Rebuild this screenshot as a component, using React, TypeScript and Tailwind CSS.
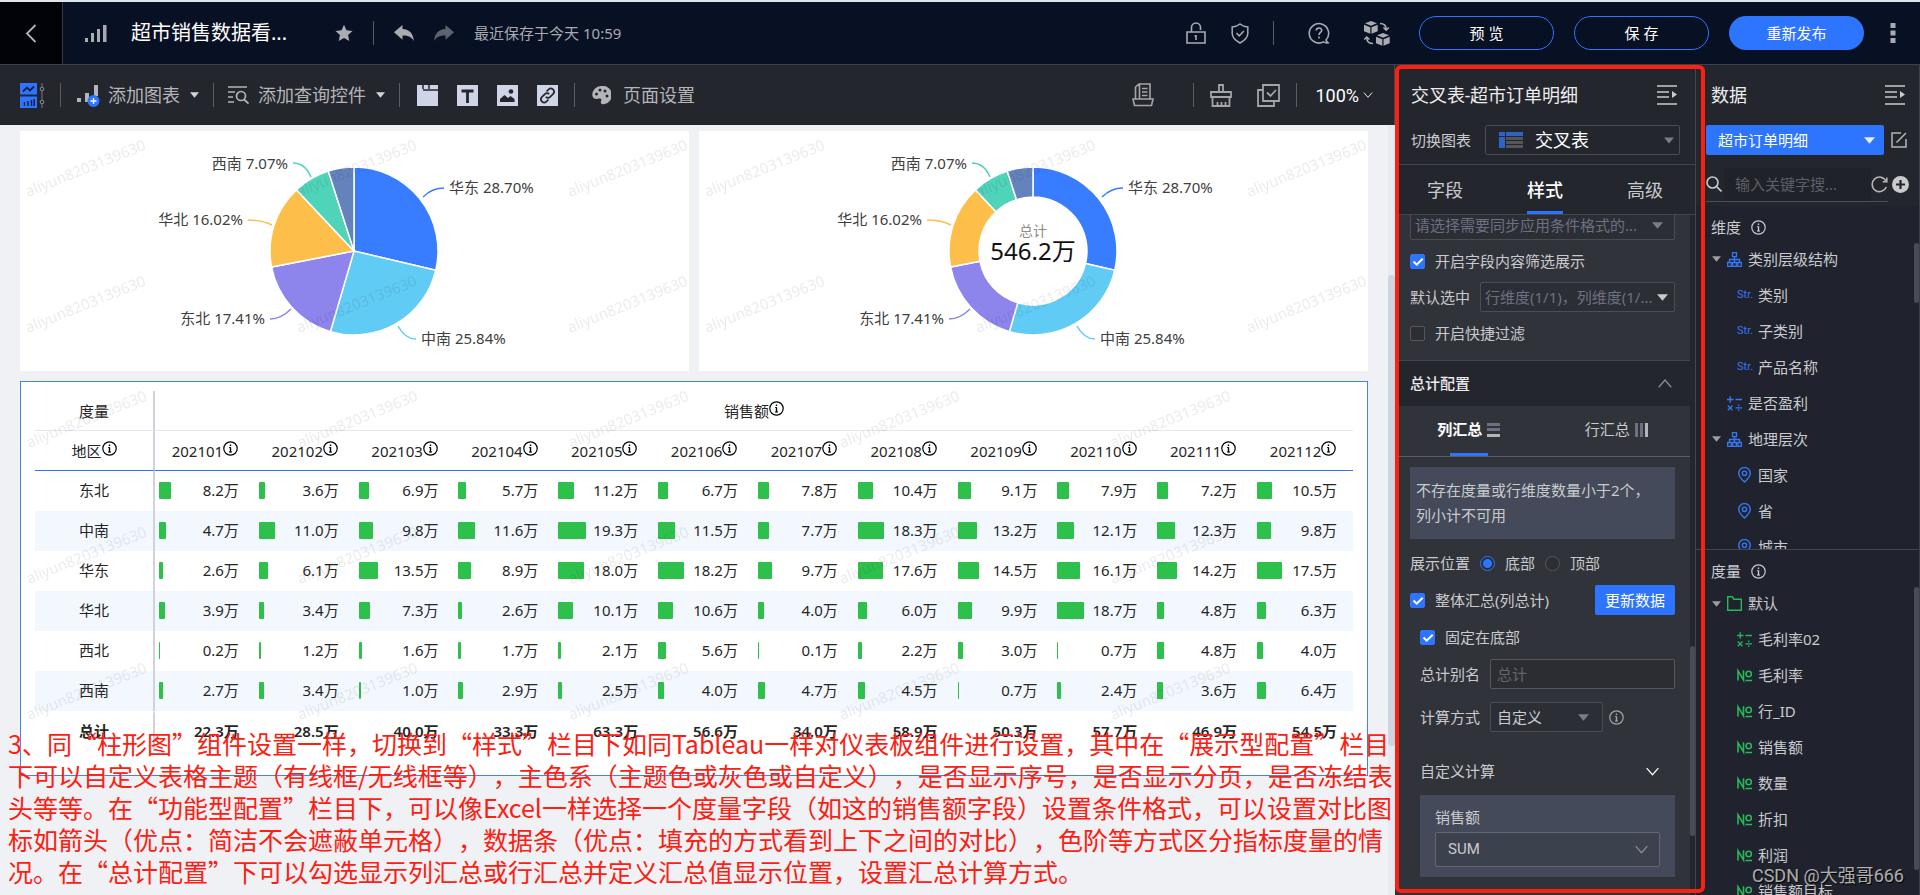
import { ReactNode, useState } from 'react'

type Slice = {
  name: string
  value: number
  color: string
  line?: string
  x?: number
  y?: number
  anchor?: 'start' | 'end'
}

type Field = {
  name: string
  icon: 'str' | 'calc' | 'tree' | 'pin' | 'no' | 'folder'
  depth: number
}

const slices: Slice[] = [
  { name: '华东', value: 28.7, color: '#387cff', line: 'M403 66 Q412 57 424 57', x: 429, y: 62, anchor: 'start' },
  { name: '中南', value: 25.84, color: '#60cbf5', line: 'M378 195 Q385 208 396 208', x: 401, y: 213, anchor: 'start' },
  { name: '东北', value: 17.41, color: '#8d84ec', line: 'M271 178 Q261 188 250 188', x: 245, y: 193, anchor: 'end' },
  { name: '华北', value: 16.02, color: '#fdbf49', line: 'M252 94 Q242 89 228 89', x: 223, y: 94, anchor: 'end' },
  { name: '西南', value: 7.07, color: '#4fd3b9', line: 'M291 46 Q285 32 273 32', x: 268, y: 38, anchor: 'end' },
  { name: '西北', value: 4.96, color: '#6482bc' },
]

const months = [
  '202101', '202102', '202103', '202104', '202105', '202106',
  '202107', '202108', '202109', '202110', '202111', '202112',
]

const rows = [
  { region: '东北', values: [8.2, 3.6, 6.9, 5.7, 11.2, 6.7, 7.8, 10.4, 9.1, 7.9, 7.2, 10.5] },
  { region: '中南', values: [4.7, 11.0, 9.8, 11.6, 19.3, 11.5, 7.7, 18.3, 13.2, 12.1, 12.3, 9.8] },
  { region: '华东', values: [2.6, 6.1, 13.5, 8.9, 18.0, 18.2, 9.7, 17.6, 14.5, 16.1, 14.2, 17.5] },
  { region: '华北', values: [3.9, 3.4, 7.3, 2.6, 10.1, 10.6, 4.0, 6.0, 9.9, 18.7, 4.8, 6.3] },
  { region: '西北', values: [0.2, 1.2, 1.6, 1.7, 2.1, 5.6, 0.1, 2.2, 3.0, 0.7, 4.8, 4.0] },
  { region: '西南', values: [2.7, 3.4, 1.0, 2.9, 2.5, 4.0, 4.7, 4.5, 0.7, 2.4, 3.6, 6.4] },
]

const totals = [22.3, 28.5, 40.0, 33.3, 63.3, 56.6, 34.0, 58.9, 50.3, 57.7, 46.9, 54.5]

const dimensions: Field[] = [
  { name: '类别层级结构', icon: 'tree', depth: 0 },
  { name: '类别', icon: 'str', depth: 1 },
  { name: '子类别', icon: 'str', depth: 1 },
  { name: '产品名称', icon: 'str', depth: 1 },
  { name: '是否盈利', icon: 'calc', depth: 0 },
  { name: '地理层次', icon: 'tree', depth: 0 },
  { name: '国家', icon: 'pin', depth: 1 },
  { name: '省', icon: 'pin', depth: 1 },
  { name: '城市', icon: 'pin', depth: 1 },
]

const measures: Field[] = [
  { name: '默认', icon: 'folder', depth: 0 },
  { name: '毛利率02', icon: 'calc', depth: 1 },
  { name: '毛利率', icon: 'no', depth: 1 },
  { name: '行_ID', icon: 'no', depth: 1 },
  { name: '销售额', icon: 'no', depth: 1 },
  { name: '数量', icon: 'no', depth: 1 },
  { name: '折扣', icon: 'no', depth: 1 },
  { name: '利润', icon: 'no', depth: 1 },
  { name: '销售额目标', icon: 'no', depth: 1 },
]

const noteLines = [
  '3、同“柱形图”组件设置一样，切换到“样式”栏目下如同Tableau一样对仪表板组件进行设置，其中在“展示型配置”栏目',
  '下可以自定义表格主题（有线框/无线框等），主色系（主题色或灰色或自定义），是否显示序号，是否显示分页，是否冻结表',
  '头等等。在“功能型配置”栏目下，可以像Excel一样选择一个度量字段（如这的销售额字段）设置条件格式，可以设置对比图',
  '标如箭头（优点：简洁不会遮蔽单元格），数据条（优点：填充的方式看到上下之间的对比），色阶等方式区分指标度量的情',
  '况。在“总计配置”下可以勾选显示列汇总或行汇总并定义汇总值显示位置，设置汇总计算方式。',
]

function slicePath(from: number, to: number, inner: number) {
  const cx = 334
  const cy = 120
  const r = 84
  const point = (t: number, radius: number) => {
    const a = t * Math.PI * 2 - Math.PI / 2
    return `${cx + radius * Math.cos(a)} ${cy + radius * Math.sin(a)}`
  }
  const large = to - from > 0.5 ? 1 : 0
  if (!inner) {
    return `M${cx} ${cy} L${point(from, r)} A${r} ${r} 0 ${large} 1 ${point(to, r)} Z`
  }
  return `M${point(from, inner)} L${point(from, r)} A${r} ${r} 0 ${large} 1 ${point(to, r)} L${point(to, inner)} A${inner} ${inner} 0 ${large} 0 ${point(from, inner)} Z`
}

function Watermark({ id }: { id: string }) {
  return (
    <svg className="pointer-events-none absolute inset-0 h-full w-full" aria-hidden="true">
      <defs>
        <pattern id={id} width="271" height="136" patternUnits="userSpaceOnUse">
          <text x="8" y="66" fontSize="15" fill="#000" fillOpacity="0.08" transform="rotate(-22 8 66)">
            aliyun8203139630
          </text>
        </pattern>
      </defs>
      <rect width="100%" height="100%" fill={`url(#${id})`} />
    </svg>
  )
}

function PieCard({ id, inner = 0, total }: { id: string; inner?: number; total?: string }) {
  let start = 0
  return (
    <section className="relative min-w-0 flex-1 bg-white">
      <svg className="h-60 w-full" viewBox="0 0 669 240" fontSize="15">
        {slices.map((slice) => {
          const from = start
          start += slice.value / 100
          return (
            <g key={slice.name}>
              <path d={slicePath(from, start, inner)} fill={slice.color} stroke="#fff" strokeWidth="1.5" />
              {slice.line && (
                <>
                  <path d={slice.line} fill="none" stroke={slice.color} strokeWidth="1.5" />
                  <text x={slice.x} y={slice.y} textAnchor={slice.anchor} fill="#404040">
                    {slice.name} {slice.value.toFixed(2)}%
                  </text>
                </>
              )}
            </g>
          )
        })}
        {total && (
          <>
            <text x="334" y="105" textAnchor="middle" fontSize="14" fill="#8c8c8c">总计</text>
            <text x="334" y="129" textAnchor="middle" fontSize="24" fill="#111">{total}</text>
          </>
        )}
      </svg>
      <Watermark id={id} />
    </section>
  )
}

function InfoIcon({ className }: { className: string }) {
  return (
    <svg className={className} viewBox="0 0 15 15" fill="none" stroke="currentColor" strokeWidth="1.2">
      <circle cx="7.5" cy="7.5" r="6.7" />
      <path d="M7.5 6.2v5M7.5 3.6v1.5" strokeWidth="1.4" />
      <path d="M6 11h3M6.2 6.5h1.3" strokeWidth="1" />
    </svg>
  )
}

function CrossTable() {
  return (
    <section className="relative mt-[10px] border border-[#3d85f0] bg-white px-[14px] pt-[9px] pb-6">
      <table className="w-full table-fixed border-separate border-spacing-0 text-[15px] leading-5 text-[#262626]">
        <colgroup>
          <col className="w-[120px]" />
          {months.map((month) => <col key={month} />)}
        </colgroup>
        <thead>
          <tr>
            <th className="h-10 border-r-2 border-b border-r-[#cfd2dd] border-b-[#e6e7ea] p-0 font-normal">度量</th>
            <th colSpan={12} className="h-10 border-b border-[#e6e7ea] p-0 font-normal">
              <span className="inline-flex items-start">
                销售额<InfoIcon className="h-[15px] w-[15px] text-black" />
              </span>
            </th>
          </tr>
          <tr>
            <th className="h-10 border-r-2 border-b border-r-[#cfd2dd] border-b-[#2f74f2] p-0 font-normal">
              <span className="inline-flex items-start">
                地区<InfoIcon className="h-[15px] w-[15px] text-black" />
              </span>
            </th>
            {months.map((month) => (
              <th key={month} className="h-10 border-b border-[#2f74f2] p-0 font-normal">
                <span className="inline-flex items-start">
                  {month}<InfoIcon className="h-[15px] w-[15px] text-black" />
                </span>
              </th>
            ))}
          </tr>
        </thead>
        <tbody>
          {rows.map((row) => (
            <tr key={row.region} className="even:bg-[#f3f8ff]">
              <th className="h-10 border-r-2 border-[#cfd2dd] p-0 pb-[2px] font-normal">{row.region}</th>
              {row.values.map((value, i) => (
                <td key={months[i]} className="h-10 p-0 pb-[2px]">
                  <div className="flex items-center justify-between pr-4 pl-1">
                    <span
                      className="h-[17px] rounded-[1px] bg-[#2dc14c]"
                      style={{ width: Math.max(1, Math.round(value * 1.4 + 0.5)) }}
                    />
                    <span>{value.toFixed(1)}万</span>
                  </div>
                </td>
              ))}
            </tr>
          ))}
        </tbody>
        <tfoot>
          <tr>
            <th className="h-10 border-t-2 border-r-2 border-t-white border-r-[#cfd2dd] p-0 pb-[2px] font-semibold">总计</th>
            {totals.map((value, i) => (
              <td key={months[i]} className="h-10 border-t-2 border-white p-0 pr-4 pb-[2px] text-right font-semibold">
                {value.toFixed(1)}万
              </td>
            ))}
          </tr>
        </tfoot>
      </table>
      <Watermark id="wm-table" />
    </section>
  )
}

function Caret({ className }: { className: string }) {
  return (
    <svg className={className} viewBox="0 0 10 6" fill="currentColor">
      <path d="M0 0h10L5 6z" />
    </svg>
  )
}

function Chevron({ className }: { className: string }) {
  return (
    <svg className={className} viewBox="0 0 14 9" fill="none" stroke="currentColor" strokeWidth="1.3">
      <path d="M.7.8 7 8 13.3.8" />
    </svg>
  )
}

function CollapseIcon() {
  return (
    <svg className="h-5 w-5" viewBox="0 0 20 20" fill="none" stroke="#c9cacd" strokeWidth="1.6">
      <path d="M0 1h20M0 7h12M0 12h12M0 19h20" />
      <path d="M15 6v7l5-3.500z" fill="#c9cacd" stroke="none" />
    </svg>
  )
}

function Checkbox({ label, defaultChecked = false }: { label: string; defaultChecked?: boolean }) {
  return (
    <label className="flex h-[30px] items-center gap-[10px]">
      <span className="grid">
        <input
          type="checkbox"
          defaultChecked={defaultChecked}
          className="peer col-start-1 row-start-1 h-[15px] w-[15px] appearance-none rounded-[2px] border border-[#55575e] bg-[#2c2e34] checked:border-[#2d74ff] checked:bg-[#2d74ff]"
        />
        <svg className="pointer-events-none invisible col-start-1 row-start-1 h-[15px] w-[15px] peer-checked:visible" viewBox="0 0 15 15" fill="none" stroke="#fff" strokeWidth="2">
          <path d="m3.500 7.500 3.200 3.200 6-6" />
        </svg>
      </span>
      {label}
    </label>
  )
}

function Radio({ label, defaultChecked = false }: { label: string; defaultChecked?: boolean }) {
  return (
    <label className="flex items-center gap-[10px]">
      <input
        type="radio"
        name="total-position"
        defaultChecked={defaultChecked}
        className="h-[15px] w-[15px] appearance-none rounded-full border border-[#55575e] bg-[#2c2e34] checked:border-[#2d74ff] checked:bg-[radial-gradient(circle,#2d74ff_4px,#2c2e34_5px)]"
      />
      {label}
    </label>
  )
}

function Divider({ className }: { className: string }) {
  return <span className={`h-6 w-px shrink-0 bg-[#5b5d63] ${className}`} />
}

function FieldIcon({ icon }: { icon: Field['icon'] }) {
  if (icon === 'str') return <span className="w-[15px] font-[Roboto,sans-serif] text-[11px] leading-4 text-[#3478f6]">Str.</span>
  if (icon === 'no') {
    return (
      <svg className="h-[15px] w-[15px]" viewBox="0 0 15 15" fill="none" stroke="#27b85a" strokeWidth="1.6">
        <path d="M1 12.500V2.800l5.500 9V2.300M8.500 12.500H15" />
        <circle cx="11.700" cy="6" r="2.700" />
      </svg>
    )
  }
  if (icon === 'tree') {
    return (
      <svg className="h-[15px] w-[15px]" viewBox="0 0 15 15" fill="none" stroke="#3478f6" strokeWidth="1.3">
        <path d="M5.500.7h4v4h-4zM.7 10.500h3.500v3.800H.7zM5.700 10.500h3.600v3.800H5.700zM10.800 10.500h3.500v3.800h-3.500zM7.500 4.700v5.800M2.500 10.500v-3h10v3" />
      </svg>
    )
  }
  if (icon === 'pin') {
    return (
      <svg className="h-4 w-[15px]" viewBox="0 0 15 16" fill="none" stroke="#3478f6" strokeWidth="1.4">
        <path d="M7.500 15C4 11.700 1.700 9.300 1.700 6.400a5.800 5.800 0 0 1 11.600 0c0 2.900-2.300 5.300-5.800 8.600z" />
        <circle cx="7.500" cy="6.300" r="2.200" />
      </svg>
    )
  }
  if (icon === 'folder') {
    return (
      <svg className="h-[15px] w-[15px]" viewBox="0 0 15 15" fill="none" stroke="#27b85a" strokeWidth="1.4">
        <path d="M.7 14.300V.7h4.600l1.500 2.500h7.500v11.100z" />
      </svg>
    )
  }
  return null
}

function CalcIcon({ className }: { className: string }) {
  return (
    <svg className={className} viewBox="0 0 15 15" fill="none" stroke="currentColor" strokeWidth="1.3">
      <path d="M0 3.500h6.500M3.200.3v6.400M8.500 3.500H15M.8 9.500l4.700 4.700M5.500 9.500.8 14.200M8.500 11.800H15M11.700 8.600v1.600M11.700 13.400V15" />
    </svg>
  )
}

function FieldList({ fields, calcClass }: { fields: Field[]; calcClass: string }) {
  return (
    <ul>
      {fields.map((field) => (
        <li key={field.name} className={`flex h-9 items-center ${field.depth ? 'pl-[41px]' : 'pl-4'}`}>
          {!field.depth && (
            <span className="w-[15px] text-[#9c9da0]">
              {field.icon !== 'calc' && <Caret className="h-[6px] w-[9px]" />}
            </span>
          )}
          {field.icon === 'calc' ? <CalcIcon className={calcClass} /> : <FieldIcon icon={field.icon} />}
          <span className="ml-[6px] whitespace-nowrap">{field.name}</span>
        </li>
      ))}
    </ul>
  )
}

function TopBar() {
  return (
    <header className="flex h-[63px] shrink-0 items-center border-b border-[#3b3f4a] bg-[#081024] text-[#a9abb0]">
      <button type="button" aria-label="返回" className="flex h-full w-[63px] items-center justify-center border-r border-[#363a45] bg-[#020308]">
        <svg className="h-[19px] w-3" viewBox="0 0 12 19" fill="none" stroke="#b4b5b8" strokeWidth="1.8">
          <path d="M10.500 1 2 9.500l8.500 8.500" />
        </svg>
      </button>
      <svg className="ml-[22px] h-[17px] w-[22px]" viewBox="0 0 22 17" fill="currentColor">
        <path d="M0 13h3v4H0zM6 8h3v9H6zM12 4h3v13h-3zM18 0h3.500v17H18z" />
      </svg>
      <h1 className="ml-6 text-[20px] leading-7 whitespace-nowrap text-white">超市销售数据看...</h1>
      <button type="button" aria-label="收藏" className="ml-12">
        <svg className="h-[18px] w-[18px]" viewBox="0 0 18 18" fill="currentColor">
          <path d="m9 .8 2.500 5.500 6 .7-4.400 4.100 1.200 5.900L9 14.100 3.700 17l1.200-5.900L.5 7l6-.7z" />
        </svg>
      </button>
      <Divider className="mx-5" />
      <button type="button" aria-label="撤销">
        <svg className="h-4 w-5" viewBox="0 0 20 16" fill="currentColor">
          <path d="M8.500 0v4c7 .4 10.800 4.300 11.300 12-2.300-3.800-5.600-5.500-11.300-5.400v4.100L0 7.200z" />
        </svg>
      </button>
      <button type="button" aria-label="重做" className="ml-5 text-[#5e626d]">
        <svg className="h-4 w-5" viewBox="0 0 20 16" fill="currentColor">
          <path d="M11.500 0v4C4.500 4.400.7 8.300.2 16c2.300-3.800 5.600-5.500 11.300-5.400v4.100L20 7.200z" />
        </svg>
      </button>
      <span className="ml-5 text-[15px] leading-5 whitespace-nowrap">最近保存于今天 10:59</span>

      <div className="ml-auto flex items-center pr-6">
        <svg className="h-[22px] w-5" viewBox="0 0 20 22" fill="none" stroke="currentColor" strokeWidth="1.6">
          <path d="M1 10h18v11H1zM5.500 10V5.500a4.500 4.500 0 0 1 9 0V8M10 13v5" />
          <path d="M8.500 14H10" />
        </svg>
        <svg className="ml-[25px] h-[21px] w-[18px]" viewBox="0 0 18 21" fill="none" stroke="currentColor" strokeWidth="1.5">
          <path d="M9 1c2.300 1.800 4.800 2.800 7.800 3v6.500c0 3.800-3.200 7-7.800 9.500-4.600-2.500-7.800-5.700-7.800-9.500V4C4.200 3.800 6.700 2.800 9 1z" />
          <path d="m5.500 10 2.700 2.800 4.700-4.800" />
        </svg>
        <Divider className="ml-6" />
        <svg className="ml-[34px] h-[22px] w-[22px]" viewBox="0 0 22 22" fill="none" stroke="currentColor" strokeWidth="1.6">
          <path d="M18 18a9.700 9.700 0 1 0-2.500 1.900c1.500.9 3 1.100 4.500.9-.9-.8-1.600-1.700-2-2.800z" />
          <path d="M8.300 8.500c.2-3.500 5.500-3.300 5.400-.1 0 2-2.700 2.200-2.700 4.600M11 14.600v1.800" />
        </svg>
        <svg className="ml-[34px] h-[25px] w-[26px]" viewBox="0 0 26 25" fill="currentColor">
          <path d="M7 0l6 2.300-6 2.400L1 2.300zM0 3.700l6.300 2.500v6.600L0 10.200zM13.700 3.700 7.500 6.200v6.600l6.200-2.600z" />
          <path d="M19 12l6 2.300-6 2.400-6-2.400zM12 15.700l6.300 2.500v6.600L12 22.200zM25.700 15.700l-6.200 2.500v6.600l6.200-2.600z" />
          <path d="M16 2.500c4 0 6 1.800 6.200 5.500M19.500 6.500l2.700 2.700L24.800 6.500M9 22.500c-3.500 0-6-1.800-6.200-5M.3 18.500 2.800 16l2.600 2.500" fill="none" stroke="currentColor" strokeWidth="1.6" />
        </svg>
        <button type="button" className="ml-[29px] h-[34px] w-[135px] rounded-full border border-[#2d74ff] text-[15px] text-white">预 览</button>
        <button type="button" className="ml-5 h-[34px] w-[135px] rounded-full border border-[#2d74ff] text-[15px] text-white">保 存</button>
        <button type="button" className="ml-5 h-[34px] w-[135px] rounded-full bg-[#2d74ff] text-[15px] text-white">重新发布</button>
        <button type="button" aria-label="更多" className="ml-[26px]">
          <svg className="h-5 w-[6px]" viewBox="0 0 6 20" fill="currentColor">
            <path d="M.5 0h5v5h-5zM.5 7.500h5v5h-5zM.5 15h5v5h-5z" />
          </svg>
        </button>
      </div>
    </header>
  )
}

function ToolTile({ label, children }: { label: string; children: ReactNode }) {
  return (
    <button type="button" aria-label={label}>
      <svg className="h-[21px] w-[21px]" viewBox="0 0 21 21" fill="none" stroke="#24262e" strokeWidth="2">
        <path d="M0 0h21v21H0z" fill="#cfd5e6" stroke="none" />
        {children}
      </svg>
    </button>
  )
}

function Toolbar() {
  return (
    <div className="flex h-[60px] shrink-0 items-center border-r border-[#44464d] bg-[#24262e] pl-5 text-[18px] whitespace-nowrap text-[#b4b5b8]">
      <svg className="h-[25px] w-[25px]" viewBox="0 0 25 25" fill="none">
        <path d="M0 0h17v11.500H0zM0 13.500h17V25H0z" fill="#2d74ff" />
        <path d="m3 8.500 4-4 3 3 4-4" stroke="#16213d" strokeWidth="1.8" />
        <path d="M4.500 23v-4M8 23v-5M11.500 23v-6M14.200 23v-7" stroke="#16213d" strokeWidth="1.5" />
        <path d="M22 0v4M22 8v9M22 21v4" stroke="#5b5d63" strokeWidth="1.500" />
        <circle cx="22" cy="6" r="1.800" stroke="#8b8d92" />
        <circle cx="22" cy="19" r="1.800" stroke="#8b8d92" />
      </svg>
      <Divider className="mr-4 ml-[15px]" />
      <button type="button" className="flex items-center">
        <svg className="h-[25px] w-[23px]" viewBox="0 0 23 25" fill="#b4b5b8">
          <path d="M0 15h4v4H0zM8 10h4v9H8zM17 2h4v11h-4z" />
          <circle cx="16.500" cy="18" r="6" fill="#2d74ff" />
          <path d="M16.500 15v6M13.500 18h6" stroke="#fff" strokeWidth="1.300" />
        </svg>
        <span className="ml-2">添加图表</span>
        <Caret className="ml-[10px] h-[6px] w-[9px] text-[#d3d4d6]" />
      </button>
      <Divider className="mx-[14px]" />
      <button type="button" className="flex items-center">
        <svg className="h-[18px] w-[21px]" viewBox="0 0 21 18" fill="none" stroke="#b4b5b8" strokeWidth="1.700">
          <path d="M0 1h19M0 6h7M0 11h5M0 16h6" />
          <circle cx="13" cy="10" r="4.500" />
          <path d="m16 13.500 4.500 4" />
        </svg>
        <span className="ml-[9px]">添加查询控件</span>
        <Caret className="ml-[10px] h-[6px] w-[9px] text-[#d3d4d6]" />
      </button>
      <Divider className="mr-[17px] ml-[14px]" />
      <div className="flex gap-[19px]">
        <ToolTile label="标签页">
          <path d="M6 0v4M12 0v4M6 5h15" strokeWidth="1.500" />
        </ToolTile>
        <ToolTile label="文本">
          <path d="M4.500 6h12M10.500 6v12" strokeWidth="2.800" />
        </ToolTile>
        <ToolTile label="图片">
          <path d="M3 17v-3l4.500-4 3.500 3 2.500-2 4 3v3z" fill="#24262e" stroke="none" />
          <circle cx="14" cy="6.500" r="2.300" fill="#24262e" stroke="none" />
        </ToolTile>
        <ToolTile label="链接">
          <path d="m9.500 6.500 2.200-2.200c2.800-2.700 7.300 1.500 4.500 4.500l-3 3c-1.500 1.400-3.200 1.100-4.400 0M11.500 14.500l-2.200 2.200c-2.800 2.700-7.300-1.500-4.500-4.500l3-3c1.500-1.400 3.200-1.100 4.400 0" strokeWidth="1.700" />
        </ToolTile>
      </div>
      <Divider className="mr-[17px] ml-4" />
      <button type="button" className="flex items-center">
        <svg className="h-[19px] w-[19px]" viewBox="0 0 19 19" fill="#b4b5b8">
          <path d="M9 0a9 9 0 1 1 3.500 18c-3 1-4.500-1-3.300-3.200.7-1.600-.4-2.800-2-2.300C3.500 13.700.5 12.500.3 9.200A9 9 0 0 1 9 0z" />
          <g fill="#24262e">
            <circle cx="4.500" cy="8" r="1.500" />
            <circle cx="8" cy="4" r="1.500" />
            <circle cx="13" cy="5" r="1.500" />
            <circle cx="15" cy="10" r="1.500" />
          </g>
        </svg>
        <span className="ml-3">页面设置</span>
      </button>

      <div className="ml-auto flex items-center pr-[21px]">
        <svg className="h-6 w-[22px]" viewBox="0 0 22 24" fill="none" stroke="#a4a5a9" strokeWidth="1.600">
          <path d="M3.500 16V4L7 1h11v15M7.500 1v15M10 5.500h5.500M10 9h5.500M10 12.500h5.500M1 16h20l-1.500 6.500h-17z" />
        </svg>
        <Divider className="ml-[39px]" />
        <svg className="ml-4 h-[23px] w-[22px]" viewBox="0 0 22 23" fill="none" stroke="#a4a5a9" strokeWidth="1.800">
          <path d="M9 8V1h4v7M1 8h20v5H1zM2.500 13v9h17v-9M7.500 22v-4M11.500 22v-4M15.500 22v-4" />
        </svg>
        <svg className="ml-[25px] h-[23px] w-[23px]" viewBox="0 0 23 23" fill="none" stroke="#a4a5a9" strokeWidth="1.800">
          <path d="M6 1h16v16H6zM6 6H1v16h16v-5" />
          <path d="m10 8.500 3.500 3.500 5.500-6" />
        </svg>
        <Divider className="mr-[18px] ml-4" />
        <button type="button" className="flex items-center gap-1 font-[Roboto,sans-serif] text-white">
          100%
          <Chevron className="h-[6px] w-[10px]" />
        </button>
      </div>
    </div>
  )
}

const selectClass =
  'col-start-1 row-start-1 h-[30px] w-full min-w-0 appearance-none rounded-[2px] border border-[#4b4d55] bg-[#2c2e35] outline-none'

function StylePanel() {
  const [tab, setTab] = useState('样式')

  return (
    <aside className="flex w-[301px] shrink-0 flex-col border-r border-[#44464d] bg-[#24262d] text-[15px] text-[#c9cacd]">
      <div className="flex h-[60px] shrink-0 items-center justify-between pr-[18px] pl-4">
        <h2 className="font-[Roboto,'Noto_Sans_CJK_SC',sans-serif] text-[18px] text-[#ececee]">交叉表-超市订单明细</h2>
        <button type="button" aria-label="收起样式面板"><CollapseIcon /></button>
      </div>
      <div className="flex items-center gap-[14px] border-b border-[#44464d] pr-[15px] pb-[9px] pl-4">
        <label htmlFor="chart-type" className="shrink-0">切换图表</label>
        <div className="grid flex-1 items-center">
          <select id="chart-type" className="col-start-1 row-start-1 h-[30px] w-full appearance-none rounded-[2px] border border-[#4b4d55] bg-[#24262d] pl-[49px] text-[18px] text-white">
            <option>交叉表</option>
          </select>
          <svg className="pointer-events-none col-start-1 row-start-1 ml-[14px] h-4 w-6" viewBox="0 0 24 16">
            <path d="M0 0h6v4H0zM7 0h17v4H7zM0 5h6v11H0z" fill="#2f63c4" />
            <path d="M7 5h17v3H7zM7 9h17v3H7zM7 13h17v3H7z" fill="#55565a" />
          </svg>
          <Caret className="pointer-events-none col-start-1 row-start-1 mr-[6px] h-[7px] w-[10px] justify-self-end text-[#7b7d86]" />
        </div>
      </div>
      <div className="grid h-[50px] shrink-0 grid-cols-3 border-b border-[#44464d] text-[18px]">
        {['字段', '样式', '高级'].map((name) => (
          <button
            key={name}
            type="button"
            onClick={() => setTab(name)}
            className={name === tab
              ? 'justify-self-center border-b-[3px] border-[#2d74ff] pt-1 font-medium text-white'
              : 'justify-self-center border-b-[3px] border-transparent pt-1'}
          >
            {name}
          </button>
        ))}
      </div>

      <div className="flex min-h-0 flex-1 overflow-hidden">
        <div className="min-w-0 flex-1 bg-[#31333a]">
          <div className="-mt-[5px] flex flex-col gap-[6px] pr-[15px] pb-3 pl-[15px]">
            <div className="grid items-center text-[#6c7080]">
              <select aria-label="同步应用条件格式" className={`${selectClass} pl-1`}>
                <option>请选择需要同步应用条件格式的...</option>
              </select>
              <Caret className="pointer-events-none col-start-1 row-start-1 mr-3 h-[7px] w-[11px] justify-self-end text-[#7b7d86]" />
            </div>
            <Checkbox label="开启字段内容筛选展示" defaultChecked />
            <div className="flex items-center gap-[10px]">
              <label htmlFor="default-selected" className="shrink-0">默认选中</label>
              <div className="grid min-w-0 flex-1 items-center text-[#6c7080]">
                <select id="default-selected" className={`${selectClass} pl-1`}>
                  <option>行维度(1/1)，列维度(1/...</option>
                </select>
                <Caret className="pointer-events-none col-start-1 row-start-1 mr-[7px] h-[7px] w-[11px] justify-self-end text-[#c9cacd]" />
              </div>
            </div>
            <Checkbox label="开启快捷过滤" />
          </div>

          <div className="flex h-[46px] items-center justify-between border-t border-[#44464d] bg-[#24262d] pr-[18px] pl-[15px]">
            <h3 className="font-medium text-[#ececee]">总计配置</h3>
            <Chevron className="h-[9px] w-[14px] rotate-180 text-[#8b8d94]" />
          </div>

          <div className="grid h-[51px] grid-cols-2 border-b border-[#5a5c62]">
            <button type="button" className="flex flex-col items-center font-bold text-white">
              <span className="flex h-[47px] items-center gap-[5px]">
                列汇总
                <svg className="h-[14px] w-[13px]" viewBox="0 0 13 14" fill="#6c7080">
                  <path d="M0 0h13v3H0zM0 5h13v3H0z" />
                  <path d="M0 11h13v3H0z" fill="#b4b5b8" />
                </svg>
              </span>
              <span className="h-[3px] w-[38px] bg-[#2d74ff]" />
            </button>
            <button type="button" className="flex h-[47px] items-center justify-center gap-[5px]">
              行汇总
              <svg className="h-[14px] w-[13px]" viewBox="0 0 13 14" fill="#6c7080">
                <path d="M0 0h3v14H0zM5 0h3v14H5z" />
                <path d="M10 0h3v14h-3z" fill="#b4b5b8" />
              </svg>
            </button>
          </div>

          <div className="flex flex-col gap-[7px] px-[15px] pt-[10px]">
            <p className="mb-[2px] bg-[#444a59] px-[6px] py-[11px] leading-[25px]">
              不存在度量或行维度数量小于2个，
              <br />
              列小计不可用
            </p>
            <div className="flex h-[30px] items-center">
              <span className="mr-[10px]">展示位置</span>
              <Radio label="底部" defaultChecked />
              <span className="w-[10px]" />
              <Radio label="顶部" />
            </div>
            <div className="flex items-center justify-between">
              <Checkbox label="整体汇总(列总计)" defaultChecked />
              <button type="button" className="h-[30px] rounded-[2px] bg-[#2d74ff] px-[10px] text-white">更新数据</button>
            </div>
            <div className="flex flex-col gap-[7px] pl-[10px]">
              <Checkbox label="固定在底部" defaultChecked />
              <div className="flex items-center gap-[10px]">
                <label htmlFor="total-alias" className="shrink-0">总计别名</label>
                <input id="total-alias" placeholder="总计" className="h-[30px] min-w-0 flex-1 rounded-[2px] border border-[#55575e] bg-[#2c2d32] px-[6px] placeholder:text-[#63656b]" />
              </div>
              <div className="mt-[6px] flex items-center gap-[10px]">
                <label htmlFor="calc-mode" className="shrink-0">计算方式</label>
                <div className="grid w-[113px] items-center">
                  <select id="calc-mode" className={`${selectClass} pl-[6px]`}>
                    <option>自定义</option>
                  </select>
                  <Caret className="pointer-events-none col-start-1 row-start-1 mr-[14px] h-[7px] w-[11px] justify-self-end text-[#7b7d86]" />
                </div>
                <InfoIcon className="-ml-1 h-[15px] w-[15px] text-[#a4a5a9]" />
              </div>
              <div className="mt-[17px] flex h-[30px] items-center justify-between pr-4">
                <span>自定义计算</span>
                <Chevron className="h-[9px] w-[13px] text-white" />
              </div>
              <div className="mt-[2px] bg-[#444a59] px-[15px] py-[10px]">
                <label htmlFor="sales-calc" className="block leading-[25px]">销售额</label>
                <div className="mt-[2px] grid items-center">
                  <select id="sales-calc" className="col-start-1 row-start-1 h-[35px] w-full appearance-none rounded-[2px] border border-[#636773] bg-[#3c414e] pl-3 font-[Roboto,sans-serif]">
                    <option>SUM</option>
                  </select>
                  <Chevron className="pointer-events-none col-start-1 row-start-1 mr-3 h-[9px] w-[13px] justify-self-end text-[#8b8d94]" />
                </div>
              </div>
            </div>
          </div>
        </div>
        <div className="flex w-[5px] flex-col bg-[#24262d]">
          <span className="flex-[431]" />
          <span className="flex-[190] rounded-full bg-[#494c57]" />
          <span className="flex-[59]" />
        </div>
      </div>
    </aside>
  )
}

function DataPanel() {
  return (
    <aside className="flex w-56 shrink-0 flex-col border-r border-[#3b3f4a] bg-[#24262e] text-[15px] text-[#c9cacd]">
      <div className="flex h-[60px] shrink-0 items-center justify-between pr-[14px] pl-[15px]">
        <h2 className="text-[18px] text-[#ececee]">数据</h2>
        <button type="button" aria-label="收起数据面板"><CollapseIcon /></button>
      </div>
      <div className="flex items-center pr-3 pl-[10px]">
        <div className="grid flex-1 items-center">
          <select aria-label="数据集" className="col-start-1 row-start-1 h-[30px] w-full appearance-none rounded-[2px] bg-[#2d74ff] pl-3 text-white">
            <option>超市订单明细</option>
          </select>
          <Caret className="pointer-events-none col-start-1 row-start-1 mr-[9px] h-[7px] w-[11px] justify-self-end text-[#e4edff]" />
        </div>
        <button type="button" aria-label="编辑数据集" className="ml-[7px]">
          <svg className="h-4 w-4" viewBox="0 0 16 16" fill="none" stroke="#b4b5b8" strokeWidth="1.500">
            <path d="M10 1H1v14h14V7M5.500 10.500 15 1" />
          </svg>
        </button>
      </div>
      <div className="mt-3 flex items-center pr-[10px] pl-[10px]">
        <label className="flex h-[35px] flex-1 items-center border-b border-[#4b4d55]">
          <svg className="h-4 w-4 shrink-0" viewBox="0 0 16 16" fill="none" stroke="#c9cacd" strokeWidth="1.600">
            <circle cx="6.500" cy="6.500" r="5.500" />
            <path d="m10.500 10.500 5 5" />
          </svg>
          <input placeholder="输入关键字搜..." aria-label="搜索字段" className="ml-[2px] h-[33px] w-0 flex-1 bg-[#20222a] pl-[11px] placeholder:text-[#5d5f66]" />
        </label>
        <button type="button" aria-label="刷新" className="flex h-[35px] items-center border-b border-[#4b4d55]">
          <svg className="h-[17px] w-[17px]" viewBox="0 0 17 17" fill="none" stroke="#b4b5b8" strokeWidth="1.600">
            <path d="M15.300 11A7.300 7.300 0 1 1 15 5M15.800 1.500v4.200h-4" />
          </svg>
        </button>
        <button type="button" aria-label="新建字段" className="ml-1">
          <svg className="h-[17px] w-[17px]" viewBox="0 0 17 17">
            <circle cx="8.500" cy="8.500" r="8.500" fill="#c9cacd" />
            <path d="M8.500 4v9M4 8.500h9" stroke="#24262e" strokeWidth="2.200" />
          </svg>
        </button>
      </div>

      <div className="mt-1 flex min-h-0 flex-[343] overflow-hidden bg-[#20232d]">
        <div className="min-w-0 flex-1 pt-3">
          <h3 className="mb-[5px] flex h-[18px] items-center gap-[10px] pl-[15px]">
            维度<InfoIcon className="h-[15px] w-[15px]" />
          </h3>
          <FieldList fields={dimensions} calcClass="h-[15px] w-[15px] text-[#3478f6]" />
        </div>
        <div className="flex w-[5px] flex-col">
          <span className="flex-[37]" />
          <span className="flex-[60] rounded-full bg-[#494c57]" />
          <span className="flex-[246]" />
        </div>
      </div>
      <div className="flex min-h-0 flex-[346] overflow-hidden border-t border-[#44464d] bg-[#20232d]">
        <div className="min-w-0 flex-1 pt-[13px]">
          <h3 className="mb-[5px] flex h-[18px] items-center gap-[10px] pl-[15px]">
            度量<InfoIcon className="h-[15px] w-[15px]" />
          </h3>
          <FieldList fields={measures} calcClass="h-[15px] w-[15px] text-[#27b85a]" />
        </div>
        <div className="flex w-[5px] flex-col">
          <span className="flex-[37]" />
          <span className="flex-[283] rounded-full bg-[#494c57]" />
          <span className="flex-[25]" />
        </div>
      </div>
    </aside>
  )
}

function App() {
  return (
    <div lang="zh-CN" className="relative flex h-screen flex-col overflow-hidden border-t-2 border-[#dfe3ea] font-['Noto_Sans','Noto_Sans_CJK_SC',sans-serif] [text-spacing-trim:space-all]">
      <TopBar />
      <div className="relative flex min-h-0 flex-1">
        <main className="flex min-w-0 flex-1 flex-col">
          <Toolbar />
          <div className="relative flex min-h-0 flex-1 overflow-hidden bg-[#f0f1f5]">
            <div className="min-w-0 flex-1 px-5 pt-[6px]">
              <div className="flex gap-[10px]">
                <PieCard id="wm-pie" />
                <PieCard id="wm-donut" inner={54} total="546.2万" />
              </div>
              <CrossTable />
            </div>
            <div className="flex w-[7px] flex-col bg-[#e8eaf0]">
              <span className="flex-[150]" />
              <span className="flex-[471] rounded-full bg-[#cfd4e1]" />
              <span className="flex-[149]" />
            </div>
            <div className="pointer-events-none absolute bottom-2 left-2 font-['Noto_Sans_CJK_SC',sans-serif] text-[25px] leading-8 whitespace-nowrap text-[#fb2012]">
              {noteLines.map((line) => <p key={line}>{line}</p>)}
            </div>
          </div>
        </main>
        <StylePanel />
        <DataPanel />
        <div className="pointer-events-none absolute top-0 right-[215px] bottom-[2px] w-[310px] rounded-md border-4 border-[#fb2012]" />
      </div>
      <span className="pointer-events-none absolute right-4 bottom-[7px] font-[Roboto,'Noto_Sans_CJK_SC',sans-serif] text-[18px] leading-6 text-white/65 [text-shadow:1px_1px_1px_#000]">
        CSDN @大强哥666
      </span>
    </div>
  )
}

export default App
